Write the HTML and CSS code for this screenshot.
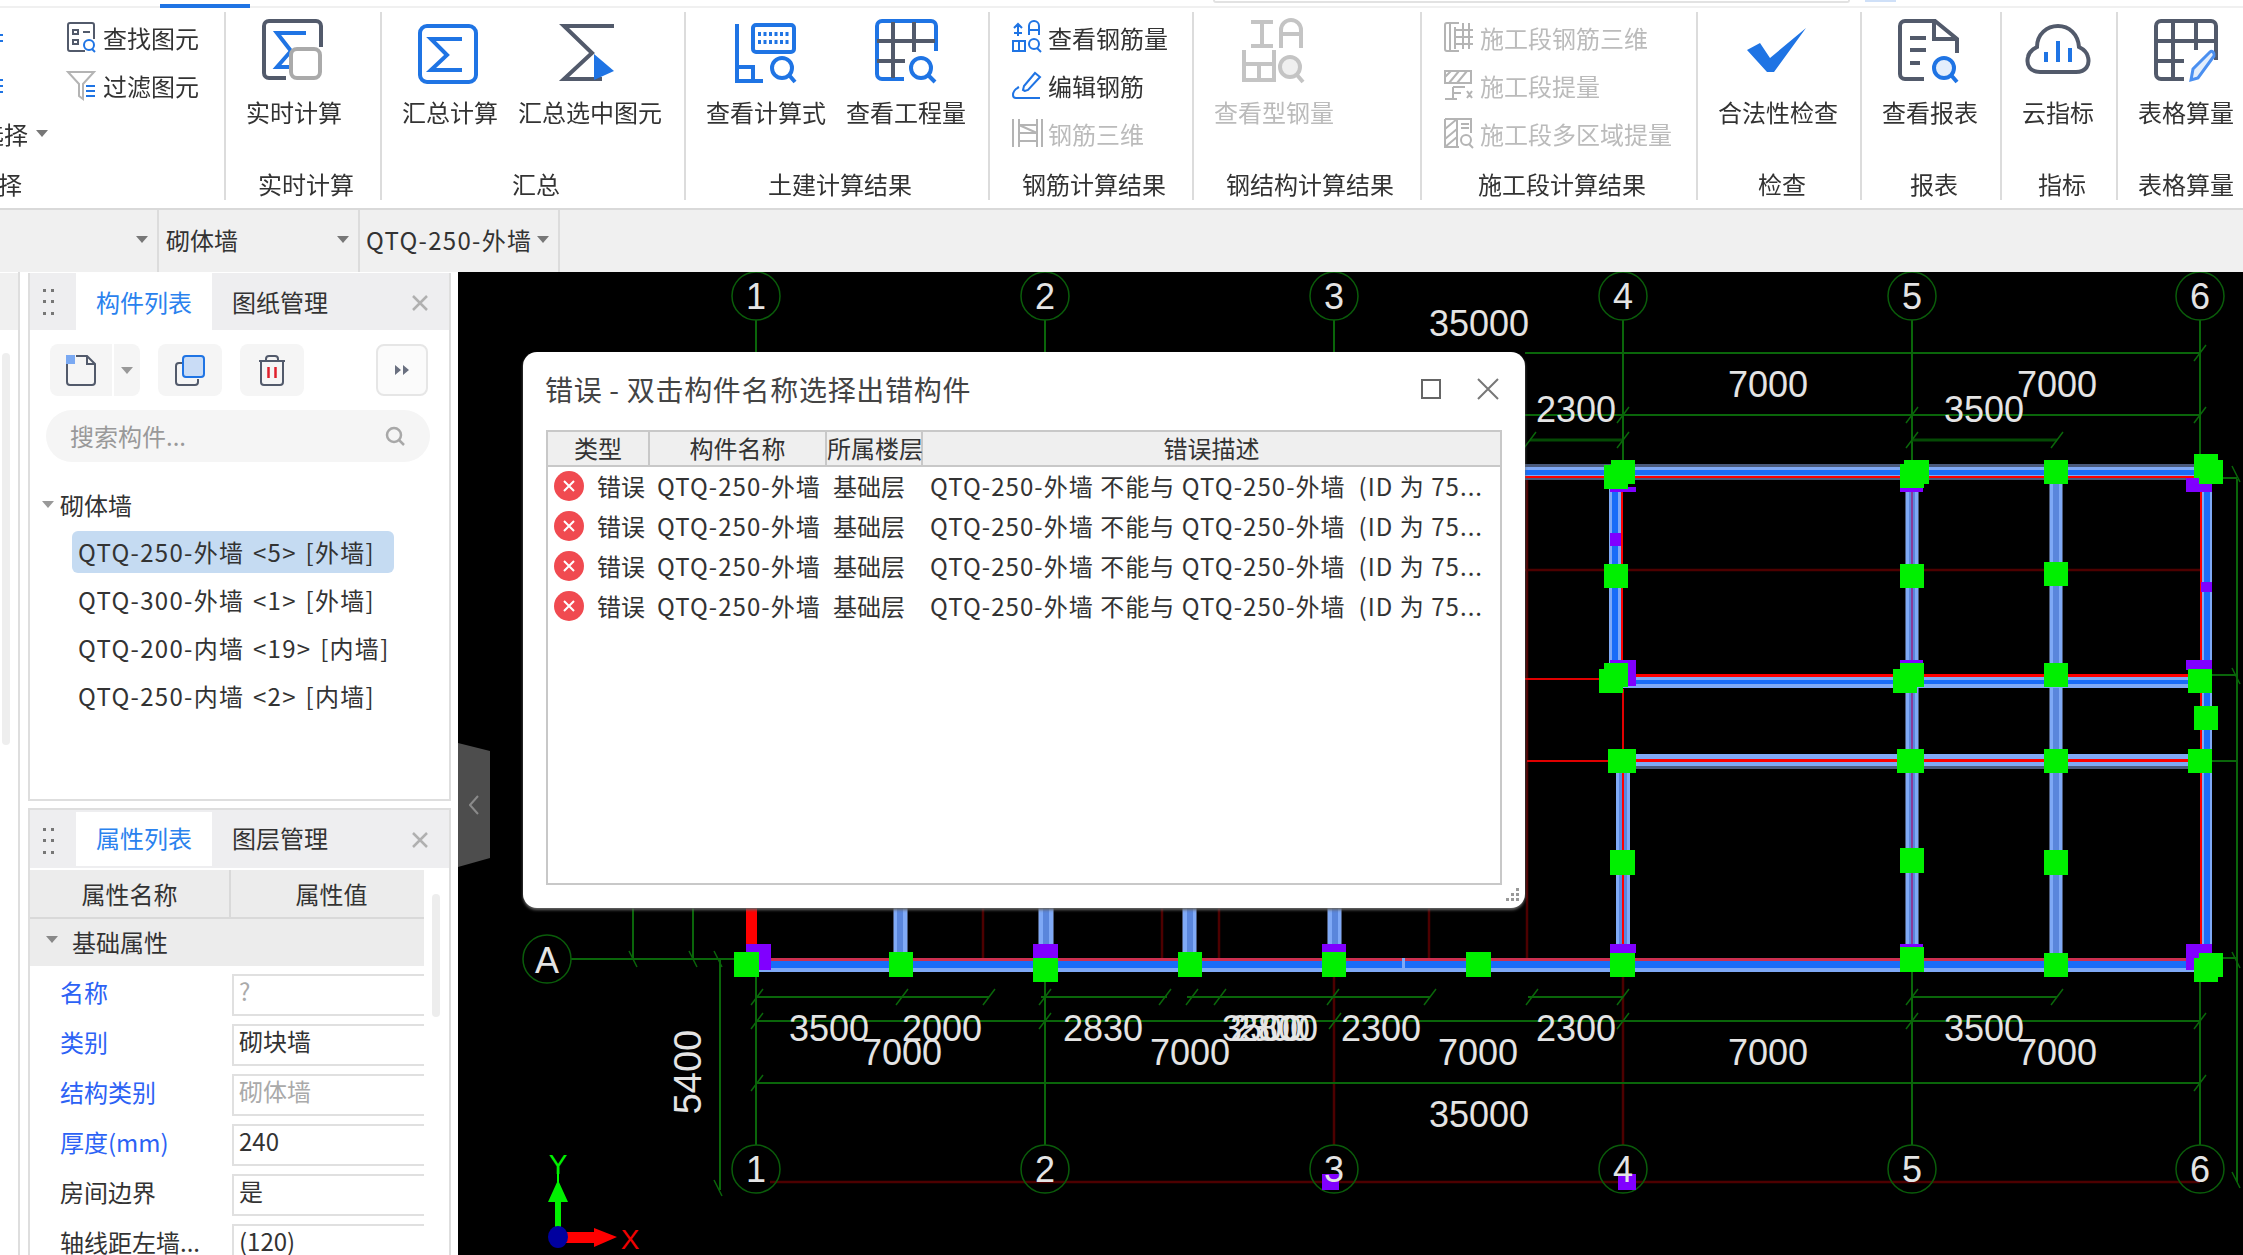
FILE: index.html
```html
<!DOCTYPE html>
<html lang="zh-CN">
<head>
<meta charset="utf-8">
<title>错误 - 双击构件名称选择出错构件</title>
<link rel="stylesheet" href="styles.css">
</head>
<body>
<div class="app">
  <div class="top">
    <div class="top-tab"></div>
    <div class="top-search"></div>
    <div class="top-chip"></div>
  </div>

  <div class="ribbon">
    <section class="group w0">
      <div class="col first">
        <div class="small first-row">
          <svg class="cut" viewBox="0 0 4 30"><path class="b2" d="M0 13h3M0 19h3"/></svg>
          <svg class="ic32" viewBox="0 0 32 32"><path class="d2" d="M19 30H4a2 2 0 0 1-2-2V4a2 2 0 0 1 2-2h22a2 2 0 0 1 2 2v14"/><path class="d2" d="M7 9h5v4H7zM17 11h7M7 19h5v4H7z"/><circle class="b2" cx="23" cy="24" r="5"/><path class="b2" d="M26 28l3 3"/></svg>
          <span>查找图元</span>
        </div>
        <div class="small first-row">
          <svg class="cut" viewBox="0 0 4 30"><path class="b2" d="M0 10h3M0 16h3M0 22h3"/></svg>
          <svg class="ic32" viewBox="0 0 32 32"><path class="g2" d="M2 3h26L17 15v15l-4-3V15z"/><path class="b2" d="M20 17h9M20 22h9M20 27h9"/></svg>
          <span>过滤图元</span>
        </div>
        <div class="small clipped"><span class="neg">选择</span><i class="tri"></i></div>
      </div>
      <div class="label left-cut">选择</div>
    </section>

    <section class="group w1">
      <div class="items">
        <div class="big">
          <svg class="ic64" viewBox="0 0 64 64"><path class="dk" d="M24 58H7a5 5 0 0 1-5-5V6a5 5 0 0 1 5-5h47a5 5 0 0 1 5 5v21"/><path class="bl" d="M44 13H15l14 18-14 16h13"/><rect class="gy" x="29" y="29" width="29" height="29" rx="6"/></svg>
          <span>实时计算</span>
        </div>
      </div>
      <div class="label">实时计算</div>
    </section>

    <section class="group w2">
      <div class="items">
        <div class="big w96">
          <svg class="ic64" viewBox="0 0 64 64"><rect class="bl" x="2" y="6" width="56" height="56" rx="7"/><path class="bl" d="M44 19H13l16 16-16 15h31"/></svg>
          <span>汇总计算</span>
        </div>
        <div class="big">
          <svg class="ic64" viewBox="0 0 64 64"><path class="dk" d="M56 6H6l28 27L6 59h38"/><path class="blf" d="M36 34l20 17-20 9z"/></svg>
          <span>汇总选中图元</span>
        </div>
      </div>
      <div class="label">汇总</div>
    </section>

    <section class="group w3">
      <div class="items">
        <div class="big">
          <svg class="ic64" viewBox="0 0 64 64"><path class="bl" d="M3 4v57h26M3 47h16v14"/><rect class="bl" x="19" y="5" width="41" height="27" rx="3"/><path class="bl3 dots" d="M24 14h32M24 22h32"/><circle class="bl" cx="48" cy="48" r="10"/><path class="bl" d="M55 55l6 7"/></svg>
          <span>查看计算式</span>
        </div>
        <div class="big">
          <svg class="ic64" viewBox="0 0 64 64"><path class="bl" d="M30 59H8a5 5 0 0 1-5-5V6a5 5 0 0 1 5-5h49a5 5 0 0 1 5 5v25"/><path class="dk" d="M19 2v56M40 2v30M3 21h58M3 41h28"/><circle class="bl" cx="47" cy="48" r="10"/><path class="bl" d="M54 55l7 7"/></svg>
          <span>查看工程量</span>
        </div>
      </div>
      <div class="label">土建计算结果</div>
    </section>

    <section class="group w4">
      <div class="col">
        <div class="small">
          <svg class="ic32" viewBox="0 0 32 32"><path class="b2" d="M7 3v12M3 7l4-4 4 4M3 12h8M2 20v10h12V20zM8 20v10M18 14V5a5 5 0 0 1 10 0v9M18 9h10"/><circle class="b2" cx="23" cy="23" r="5"/><path class="b2" d="M26 27l4 4"/></svg>
          <span>查看钢筋量</span>
        </div>
        <div class="small">
          <svg class="ic32" viewBox="0 0 32 32"><path class="b2" d="M14 22l-2-1 1-4L24 4l5 4-12 13zM8 18c-4 2-6 5-6 8 0 2 1 3 3 3h24"/></svg>
          <span>编辑钢筋</span>
        </div>
        <div class="small off">
          <svg class="ic32" viewBox="0 0 32 32"><path class="g2" d="M2 2v28M8 2v28M26 2v28M31 2v28M8 8h18M8 16h18M8 24h18M8 8l18 8"/></svg>
          <span>钢筋三维</span>
        </div>
      </div>
      <div class="label">钢筋计算结果</div>
    </section>

    <section class="group w5">
      <div class="items">
        <div class="big off">
          <svg class="ic64" viewBox="0 0 64 64"><path class="gy" d="M9 2h22M20 2v24M9 26h22M39 28V10a8 8 0 0 1 20 0v18M39 14h20M2 30v30h30V30M2 44h30M17 44v16"/><circle class="gyf" cx="48" cy="47" r="10"/><path class="gy" d="M55 55l6 7"/></svg>
          <span>查看型钢量</span>
        </div>
      </div>
      <div class="label">钢结构计算结果</div>
    </section>

    <section class="group w6">
      <div class="col">
        <div class="small off">
          <svg class="ic32" viewBox="0 0 32 32"><path class="g2" d="M16 2H4a2 2 0 0 0-2 2v24a2 2 0 0 0 2 2h12M7 2v28M12 6v22M20 2v26M26 2v26M12 9h18M12 16h18M12 23h18"/></svg>
          <span>施工段钢筋三维</span>
        </div>
        <div class="small off">
          <svg class="ic32" viewBox="0 0 32 32"><path class="g2" d="M2 2h26v12H2zM8 2l-6 6M16 2L6 14M24 2L14 14M10 18h12M10 18v12M10 24h8M2 30h12M24 22l5 7M29 22l-5 7"/></svg>
          <span>施工段提量</span>
        </div>
        <div class="small off">
          <svg class="ic32" viewBox="0 0 32 32"><path class="g2" d="M2 2h26v14M2 2v28h14M2 12L14 2M2 22L14 12M2 30l12-10M14 2v28M18 7h8M18 11h8"/><circle class="g2" cx="23" cy="23" r="5"/><path class="g2" d="M26 27l4 4"/></svg>
          <span>施工段多区域提量</span>
        </div>
      </div>
      <div class="label">施工段计算结果</div>
    </section>

    <section class="group w7">
      <div class="items">
        <div class="big">
          <svg class="ic64" viewBox="0 0 64 64"><path class="blf" d="M1 30l13-7 10 15L60 8 28 52h-7z"/></svg>
          <span>合法性检查</span>
        </div>
      </div>
      <div class="label">检查</div>
    </section>

    <section class="group w8">
      <div class="items">
        <div class="big">
          <svg class="ic64" viewBox="0 0 64 64"><path class="dk" d="M26 59H7a5 5 0 0 1-5-5V6a5 5 0 0 1 5-5h30l22 18v14M36 2v17h22M12 18h16M12 30h16M12 43h10"/><circle class="blp" cx="46" cy="48" r="10"/><path class="bl" d="M53 55l6 7"/></svg>
          <span>查看报表</span>
        </div>
      </div>
      <div class="label">报表</div>
    </section>

    <section class="group w9">
      <div class="items">
        <div class="big">
          <svg class="ic64" viewBox="0 0 64 64"><path class="dk" d="M14 52C4 52 0 45 2 37c1-5 5-8 9-10C11 14 21 6 32 6s20 8 21 21c4 2 8 5 9 10 2 8-2 15-12 15z"/><path class="bl3w" d="M20 42V32M32 42V21M44 42V28"/></svg>
          <span>云指标</span>
        </div>
      </div>
      <div class="label">指标</div>
    </section>

    <section class="group w10">
      <div class="items">
        <div class="big">
          <svg class="ic64" viewBox="0 0 64 64"><path class="dk" d="M30 59H7a5 5 0 0 1-5-5V6a5 5 0 0 1 5-5h50a5 5 0 0 1 5 5v34M19 2v56M42 2v28M2 21h60M2 41h28"/><path class="b2l" d="M37 60l2-11 17-17c2-2 5 1 4 4L44 58z"/></svg>
          <span>表格算量</span>
        </div>
      </div>
      <div class="label">表格算量</div>
    </section>
  </div>

  <div class="bar">
    <div class="cell c1"><i class="tri"></i></div>
    <div class="cell c2"><span>砌体墙</span><i class="tri"></i></div>
    <div class="cell c3"><span class="lat">QTQ-250-外墙</span><i class="tri"></i></div>
  </div>

  <div class="main">
    <aside class="side">
      <div class="strip">
        <div class="strip-tab"></div>
        <div class="strip-scroll"></div>
      </div>
      <div class="panels">
        <div class="panel p1">
          <div class="phead">
            <svg class="grip" viewBox="0 0 14 28"><path class="gripdots" d="M1 1h3v3H1zM9 1h3v3H9zM1 12h3v3H1zM9 12h3v3H9zM1 24h3v3H1zM9 24h3v3H9z"/></svg>
            <div class="tab active">构件列表</div>
            <div class="tab">图纸管理</div>
            <svg class="pclose" viewBox="0 0 16 16"><path d="M1 1l14 14M15 1L1 15"/></svg>
          </div>
          <div class="tools">
            <div class="tbtn split">
              <span class="split-a"><svg class="ic32t" viewBox="0 0 32 32"><path class="d2" d="M2 8v20a3 3 0 0 0 3 3h22a3 3 0 0 0 3-3V10l-8-8H11M22 2v8h8"/><rect class="hatch" x="1" y="1" width="9" height="9"/></svg></span>
              <span class="split-b"><i class="tri"></i></span>
            </div>
            <div class="tbtn wide">
              <svg class="ic32t" viewBox="0 0 32 32"><path class="d2" d="M8 9H5a3 3 0 0 0-3 3v16a3 3 0 0 0 3 3h16a3 3 0 0 0 3-3v-3"/><rect class="copyf" x="9" y="2" width="21" height="21" rx="3"/></svg>
            </div>
            <div class="tbtn wide">
              <svg class="ic32t" viewBox="0 0 32 32"><path class="d2" d="M3 7h26M10 7V5a3 3 0 0 1 3-3h6a3 3 0 0 1 3 3v2M5 7v21a3 3 0 0 0 3 3h16a3 3 0 0 0 3-3V7"/><path class="redb" d="M12.500 13v11M19.500 13v11"/></svg>
            </div>
            <div class="tbtn more"><svg class="ic16" viewBox="0 0 16 12"><path class="moref" d="M1 1l6 5-6 5zM9 1l6 5-6 5z"/></svg></div>
          </div>
          <div class="search">
            <span class="ph">搜索构件...</span>
            <svg class="ic20" viewBox="0 0 20 20"><circle class="sr" cx="9" cy="9" r="7"/><path class="sr" d="M14 14l5 5"/></svg>
          </div>
          <div class="tree-head"><i class="tri"></i><span>砌体墙</span></div>
          <div class="tree-list">
            <div class="tree-row sel">QTQ-250-外墙 &lt;5&gt; [外墙]</div>
            <div class="tree-row">QTQ-300-外墙 &lt;1&gt; [外墙]</div>
            <div class="tree-row">QTQ-200-内墙 &lt;19&gt; [内墙]</div>
            <div class="tree-row">QTQ-250-内墙 &lt;2&gt; [内墙]</div>
          </div>
        </div>
        <div class="panel p2">
          <div class="phead">
            <svg class="grip" viewBox="0 0 14 28"><path class="gripdots" d="M1 1h3v3H1zM9 1h3v3H9zM1 12h3v3H1zM9 12h3v3H9zM1 24h3v3H1zM9 24h3v3H9z"/></svg>
            <div class="tab active">属性列表</div>
            <div class="tab">图层管理</div>
            <svg class="pclose" viewBox="0 0 16 16"><path d="M1 1l14 14M15 1L1 15"/></svg>
          </div>
          <div class="pbody">
            <div class="ptable">
              <div class="pth"><div>属性名称</div><div class="pth-val">属性值</div></div>
              <div class="pgroup"><i class="tri"></i><span>基础属性</span></div>
              <div class="prow"><span class="key blue">名称</span><div class="val muted">?</div></div>
              <div class="prow"><span class="key blue">类别</span><div class="val">砌块墙</div></div>
              <div class="prow"><span class="key blue">结构类别</span><div class="val muted">砌体墙</div></div>
              <div class="prow"><span class="key blue">厚度(mm)</span><div class="val">240</div></div>
              <div class="prow"><span class="key">房间边界</span><div class="val">是</div></div>
              <div class="prow"><span class="key">轴线距左墙...</span><div class="val">(120)</div></div>
            </div>
            <div class="pscroll"></div>
          </div>
        </div>
      </div>
    </aside>

    <div class="canvas">
      <svg class="cad" viewBox="458 272 1785 983">
        <path class="rd1" d="M1525 570H2200M1527 478V960M1334 977V1145M1623 977V1145M770 1182H2200M983 908V960M1162 908V960M1219 908V960M1429 908V960"/>
        <path class="rd2" d="M1912 690V750M2056 690V750"/>
        <path class="rd3" d="M1525 679H1610M1527 761H1610M1623 689V754"/>
        <path class="dim" d="M756 320V352M1045 320V352M1334 320V352M1623 320V465M1912 320V465M2200 320V460M1525 353H2200M1525 415H2200M757 997H989M1041 997H1167M1187 997H1430M1528 997H1623M1912 997H2057M757 1021H2200M757 1083H2200M756 977V1145M1045 982V1145M1912 972V1145M2200 982V1145M571 959H734M633 908V959M693 908V959M720 959V1190M2237 479V1182M2212 478H2237M2212 675H2237M2212 761H2237M2223 958H2237"/>
        <path class="dimb" d="M1530 440H1622M1912 440H2057"/>
        <path class="tick" d="M2194 361l12-16M2194 423l12-16M1906 423l12-16M1617 423l12-16M1524 448l12-16M1617 448l12-16M1906 448l12-16M2051 448l12-16M751 1005l12-16M896 1005l12-16M983 1005l12-16M1039 1005l12-16M1159 1005l12-16M1186 1005l12-16M1214 1005l12-16M1327 1005l12-16M1424 1005l12-16M1526 1005l12-16M1617 1005l12-16M1906 1005l12-16M2051 1005l12-16M751 1029l12-16M1039 1029l12-16M1329 1029l12-16M1617 1029l12-16M1906 1029l12-16M2194 1029l12-16M751 1091l12-16M2194 1091l12-16M629 951l8 16M689 951l8 16M714 951l8 16M714 1180l8 16M2232 466l8 16M2232 668l8 16M2232 952l8 16M2232 1172l8 16"/>
        <g class="bub">
          <circle cx="756" cy="296" r="24"/><circle cx="1045" cy="296" r="24"/><circle cx="1334" cy="296" r="24"/><circle cx="1623" cy="296" r="24"/><circle cx="1912" cy="296" r="24"/><circle cx="2200" cy="296" r="24"/>
          <circle cx="756" cy="1169" r="24"/><circle cx="1045" cy="1169" r="24"/><circle cx="1334" cy="1169" r="24"/><circle cx="1623" cy="1169" r="24"/><circle cx="1912" cy="1169" r="24"/><circle cx="2200" cy="1169" r="24"/>
          <circle cx="547" cy="959" r="24"/>
        </g>
        <g>
          <rect class="wl" x="1609" y="480" width="12" height="194"/><rect class="wb" x="1612" y="480" width="6" height="194"/><rect class="wr" x="1621" y="480" width="2" height="194"/>
          <rect class="wl" x="1616" y="769" width="14" height="189"/><rect class="wd" x="1619" y="769" width="8" height="189"/><rect class="wr" x="1622" y="769" width="2" height="189"/>
          <rect class="wk" x="1905" y="480" width="14" height="480"/><rect class="wl" x="1906" y="480" width="12" height="480"/><rect class="wd" x="1909" y="480" width="6" height="480"/><rect class="wp" x="1911" y="480" width="2" height="480"/>
          <rect class="wk" x="2049" y="480" width="14" height="480"/><rect class="wl" x="2050" y="480" width="12" height="480"/><rect class="wd" x="2053" y="480" width="6" height="480"/>
          <rect class="wr" x="2200" y="480" width="2" height="478"/><rect class="wl" x="2202" y="480" width="10" height="478"/><rect class="wb" x="2204" y="480" width="6" height="478"/>
          <rect class="wk" x="893" y="908" width="15" height="44"/><rect class="wl" x="894" y="908" width="13" height="44"/><rect class="wd" x="897" y="908" width="6" height="44"/>
          <rect class="wk" x="1038" y="908" width="16" height="44"/><rect class="wl" x="1039" y="908" width="14" height="44"/><rect class="wd" x="1043" y="908" width="6" height="44"/>
          <rect class="wk" x="1182" y="908" width="15" height="44"/><rect class="wl" x="1183" y="908" width="13" height="44"/><rect class="wd" x="1187" y="908" width="6" height="44"/>
          <rect class="wk" x="1327" y="908" width="15" height="44"/><rect class="wl" x="1328" y="908" width="13" height="44"/><rect class="wd" x="1332" y="908" width="6" height="44"/>
          <rect class="wr" x="746" y="908" width="11" height="40"/>
        </g>
        <g>
          <rect class="wk" x="1525" y="464" width="685" height="16"/><rect class="wl" x="1525" y="467" width="685" height="10"/><rect class="wb" x="1525" y="470" width="685" height="5"/><rect class="wr" x="1525" y="476" width="685" height="2"/>
          <rect class="wl" x="1620" y="677" width="580" height="11"/><rect class="wb" x="1620" y="680" width="580" height="4"/><rect class="wr" x="1620" y="674" width="580" height="3"/>
          <rect class="wk" x="1620" y="754" width="580" height="15"/><rect class="wl" x="1620" y="754" width="580" height="12"/><rect class="wr" x="1620" y="759" width="580" height="3"/>
          <rect class="wl" x="750" y="958" width="1460" height="14"/><rect class="wb" x="750" y="961" width="1460" height="7"/><rect class="wm" x="750" y="958" width="1460" height="3"/>
          <rect class="wl" x="1402" y="958" width="3" height="14"/>
        </g>
        <g class="pur">
          <rect x="1610" y="487" width="26" height="5"/><rect x="1610" y="533" width="11" height="13"/><rect x="1900" y="488" width="23" height="4"/><rect x="2186" y="478" width="26" height="14"/><rect x="2201" y="582" width="11" height="10"/>
          <rect x="1610" y="660" width="26" height="26"/><rect x="1900" y="660" width="23" height="4"/><rect x="2186" y="660" width="26" height="10"/>
          <rect x="1610" y="944" width="26" height="9"/><rect x="1900" y="944" width="23" height="3"/><rect x="2186" y="944" width="26" height="26"/>
          <rect x="746" y="944" width="25" height="26"/><rect x="1033" y="944" width="25" height="14"/><rect x="1322" y="944" width="24" height="9"/>
          <rect x="1322" y="1174" width="17" height="16"/><rect x="1618" y="1174" width="18" height="16"/>
        </g>
        <g class="col-g">
          <rect x="1611" y="460" width="24" height="24"/><rect x="1604" y="465" width="24" height="24"/>
          <rect x="1904" y="460" width="25" height="24"/><rect x="1900" y="464" width="24" height="24"/>
          <rect x="2044" y="460" width="24" height="24"/>
          <rect x="2194" y="454" width="24" height="24"/><rect x="2199" y="460" width="24" height="24"/>
          <rect x="1604" y="564" width="24" height="24"/><rect x="1900" y="564" width="24" height="24"/><rect x="2044" y="562" width="24" height="24"/>
          <rect x="1604" y="663" width="24" height="24"/><rect x="1599" y="669" width="24" height="24"/>
          <rect x="1900" y="663" width="24" height="24"/><rect x="1893" y="669" width="24" height="24"/>
          <rect x="2044" y="663" width="24" height="24"/><rect x="2188" y="669" width="24" height="24"/><rect x="2194" y="706" width="24" height="24"/>
          <rect x="1608" y="749" width="28" height="24"/><rect x="1897" y="749" width="27" height="24"/><rect x="2044" y="749" width="24" height="24"/><rect x="2188" y="749" width="24" height="24"/>
          <rect x="1610" y="850" width="25" height="25"/><rect x="1900" y="848" width="24" height="25"/><rect x="2044" y="850" width="24" height="25"/>
          <rect x="1610" y="953" width="25" height="24"/><rect x="1900" y="947" width="24" height="25"/><rect x="2044" y="953" width="24" height="24"/>
          <rect x="2194" y="958" width="24" height="24"/><rect x="2199" y="953" width="24" height="24"/>
          <rect x="734" y="952" width="25" height="25"/><rect x="889" y="952" width="24" height="25"/><rect x="1033" y="958" width="25" height="24"/><rect x="1178" y="952" width="24" height="25"/><rect x="1322" y="952" width="24" height="25"/><rect x="1466" y="952" width="25" height="25"/>
        </g>
        <g class="cadt">
          <text x="756" y="309">1</text><text x="1045" y="309">2</text><text x="1334" y="309">3</text><text x="1623" y="309">4</text><text x="1912" y="309">5</text><text x="2200" y="309">6</text>
          <text x="756" y="1182">1</text><text x="1045" y="1182">2</text><text x="1334" y="1182">3</text><text x="1623" y="1182">4</text><text x="1912" y="1182">5</text><text x="2200" y="1182">6</text>
          <text x="547" y="973">A</text>
          <text x="1479" y="336">35000</text><text x="1768" y="397">7000</text><text x="2057" y="397">7000</text><text x="1576" y="422">2300</text><text x="1984" y="422">3500</text>
          <text x="829" y="1041">3500</text><text x="942" y="1041">2000</text><text x="902" y="1065">7000</text><text x="1103" y="1041">2830</text><text x="1190" y="1065">7000</text>
          <text x="1262" y="1041">3500</text><text x="1270" y="1041">2300</text><text x="1278" y="1041">2800</text>
          <text x="1381" y="1041">2300</text><text x="1478" y="1065">7000</text><text x="1576" y="1041">2300</text><text x="1984" y="1041">3500</text><text x="1768" y="1065">7000</text><text x="2057" y="1065">7000</text><text x="1479" y="1127">35000</text>
          <text class="rot" transform="rotate(-90 701 1072)" x="701" y="1072">5400</text>
        </g>
        <path class="axg" d="M558 1173V1182"/>
        <path class="axgf" d="M558 1180l10 22h-7v27h-6v-27h-7z"/>
        <path class="axrf" d="M566 1232h28v-4l23 9-23 10v-4h-28z"/>
        <ellipse class="axb" cx="558" cy="1237" rx="10" ry="11"/>
        <text class="axt-y" x="558" y="1174">Y</text>
        <text class="axt-x" x="630" y="1249">X</text>
      </svg>

      <div class="handle"><svg class="chev" viewBox="0 0 10 20"><path d="M9 1L1 10l8 9"/></svg></div>

      <div class="dialog">
        <div class="dtitle">
          <span class="dtext">错误 - 双击构件名称选择出错构件</span>
          <svg class="dmax" viewBox="0 0 20 20"><rect x="1" y="1" width="18" height="18"/></svg>
          <svg class="dclose" viewBox="0 0 22 22"><path d="M1 1l20 20M21 1L1 21"/></svg>
        </div>
        <div class="dtable">
          <div class="dhead dgrid">
            <div>类型</div><div>构件名称</div><div>所属楼层</div><div>错误描述</div>
          </div>
          <div class="drow dgrid">
            <div class="dtype"><svg class="err" viewBox="0 0 30 30"><circle cx="15" cy="15" r="15"/><path d="M10 10l10 10M20 10L10 20"/></svg>错误</div>
            <div class="dlat">QTQ-250-外墙</div><div>基础层</div><div class="dlat">QTQ-250-外墙 不能与 QTQ-250-外墙&nbsp; (ID 为 75...</div>
          </div>
          <div class="drow dgrid">
            <div class="dtype"><svg class="err" viewBox="0 0 30 30"><circle cx="15" cy="15" r="15"/><path d="M10 10l10 10M20 10L10 20"/></svg>错误</div>
            <div class="dlat">QTQ-250-外墙</div><div>基础层</div><div class="dlat">QTQ-250-外墙 不能与 QTQ-250-外墙&nbsp; (ID 为 75...</div>
          </div>
          <div class="drow dgrid">
            <div class="dtype"><svg class="err" viewBox="0 0 30 30"><circle cx="15" cy="15" r="15"/><path d="M10 10l10 10M20 10L10 20"/></svg>错误</div>
            <div class="dlat">QTQ-250-外墙</div><div>基础层</div><div class="dlat">QTQ-250-外墙 不能与 QTQ-250-外墙&nbsp; (ID 为 75...</div>
          </div>
          <div class="drow dgrid">
            <div class="dtype"><svg class="err" viewBox="0 0 30 30"><circle cx="15" cy="15" r="15"/><path d="M10 10l10 10M20 10L10 20"/></svg>错误</div>
            <div class="dlat">QTQ-250-外墙</div><div>基础层</div><div class="dlat">QTQ-250-外墙 不能与 QTQ-250-外墙&nbsp; (ID 为 75...</div>
          </div>
        </div>
        <svg class="dgrip" viewBox="0 0 16 16"><path d="M11 1h3v3h-3zM6 6h3v3H6zM11 6h3v3h-3zM1 11h3v3H1zM6 11h3v3H6zM11 11h3v3h-3z"/></svg>
      </div>
    </div>
  </div>
</div>
</body>
</html>
```
FILE: styles.css
```css
* { box-sizing: border-box; }
html, body { margin: 0; padding: 0; width: 2243px; height: 1255px; overflow: hidden; background: #fff; }
body { font-family: "Noto Sans CJK SC", "Noto Sans", sans-serif; font-size: 24px; color: #333; }
.app { width: 2243px; height: 1255px; display: flex; flex-direction: column; overflow: hidden; filter: blur(.4px); }
i.tri { display: inline-block; width: 0; height: 0; border-left: 6px solid transparent; border-right: 6px solid transparent; border-top: 7px solid #777; }

.top { height: 8px; flex: none; display: flex; border-bottom: 2px solid #f0f0f0; }
.top-tab { width: 90px; height: 4px; margin: 4px 0 -2px 160px; background: #1f74e4; }
.top-search { width: 637px; height: 3px; margin-left: 963px; border: 2px solid #e2e2e2; border-top: 0; border-radius: 0 0 4px 4px; }
.top-chip { width: 31px; height: 2px; margin-left: 15px; background: #cfe0f8; }

.ribbon { height: 202px; flex: none; display: flex; padding-top: 4px; border-bottom: 2px solid #d9d9d9; overflow: hidden; }
.group { flex: none; height: 188px; display: flex; flex-direction: column; border-right: 2px solid #dcdcdc; overflow: hidden; }
.w0 { width: 226px; } .w1 { width: 156px; } .w2 { width: 304px; } .w3 { width: 304px; } .w4 { width: 204px; } .w5 { width: 228px; }
.w6 { width: 276px; } .w7 { width: 164px; } .w8 { width: 140px; } .w9 { width: 116px; } .w10 { width: 130px; border-right: 0; overflow: visible; }
.label { margin-top: auto; height: 32px; line-height: 32px; padding-left: 6px; text-align: center; white-space: nowrap; }
.left-cut { text-align: left; padding-left: 0; margin-left: -26px; }
.items { display: flex; gap: 20px; padding: 8px 0 0 20px; }
.big { display: flex; flex-direction: column; align-items: center; flex: none; white-space: nowrap; line-height: 32px; }
.big .ic64 { width: 64px; height: 64px; flex: none; margin-bottom: 12px; overflow: visible; }
.w96 { width: 96px; }
.col { display: flex; flex-direction: column; padding: 1px 0 0 21px; }
.col.first { padding-left: 0; }
.small { height: 48px; display: flex; align-items: center; gap: 5px; white-space: nowrap; }
.ic32 { width: 32px; height: 32px; flex: none; overflow: visible; }
.first-row .ic32 { margin-left: 57px; }
.cut { width: 4px; height: 30px; flex: none; }
.clipped { gap: 8px; }
.neg { margin-left: -20px; }
.off, .off span { color: #bbb; }

.d2, .b2, .g2, .dk, .bl, .bl3, .gy, .b2l, .bl3w { fill: none; }
.d2 { stroke: #525a6b; stroke-width: 2; }
.b2 { stroke: #1f74e4; stroke-width: 2; }
.g2 { stroke: #b4b4b4; stroke-width: 2; }
.dk { stroke: #525a6b; stroke-width: 4; }
.bl { stroke: #1f74e4; stroke-width: 4; }
.bl3 { stroke: #1f74e4; stroke-width: 4; }
.dots { stroke-dasharray: 3 2.500; }
.bl3w { stroke: #1f74e4; stroke-width: 4; }
.gy { stroke: #c4c4c4; stroke-width: 4; }
.gyf { fill: #efefef; stroke: #c4c4c4; stroke-width: 4; }
.blf { fill: #1f74e4; }
.blp { fill: #e3eefc; stroke: #1f74e4; stroke-width: 4; }
.b2l { stroke: #4a8ff0; stroke-width: 3; fill: #e3eefc; }
.w1 .gy { stroke: #aaa; }

.bar { height: 62px; flex: none; display: flex; background: #f0f0f0; }
.cell { height: 62px; display: flex; align-items: center; border-right: 2px solid #dcdcdc; flex: none; padding: 0 0 3px 8px; }
.c1 { width: 159px; justify-content: flex-end; padding-right: 9px; }
.c2 { width: 201px; justify-content: space-between; padding-right: 9px; padding-left: 7px; }
.c3 { width: 200px; justify-content: space-between; padding-right: 9px; padding-left: 6px; }
.lat { letter-spacing: 1.300px; white-space: nowrap; }

.main { flex: 1; display: flex; min-height: 0; }
.side { width: 458px; flex: none; display: flex; overflow: hidden; background: #fff; }
.strip { width: 20px; flex: none; border-right: 2px solid #dedede; }
.strip-tab { height: 57px; margin-top: 1px; background: #f0f0f0; }
.strip-scroll { width: 8px; height: 392px; margin: 23px 0 0 2px; background: #eee; border-radius: 4px; }
.panels { width: 423px; margin-left: 8px; padding-top: 1px; display: flex; flex-direction: column; flex: none; }
.panel { border: 2px solid #dedede; flex: none; }
.p1 { height: 528px; margin-bottom: 7px; border-top: 0; }
.p2 { height: 460px; border-bottom: 0; }
.phead { height: 57px; display: flex; align-items: stretch; background: #eeeef0; }
.p2 .phead { height: 58px; padding: 2px 0; }
.p2 .tab { padding-bottom: 4px; }
.grip { width: 14px; height: 28px; margin: 15px 20px 0 12px; flex: none; }
.gripdots { fill: #777; }
.tab { width: 136px; display: flex; align-items: center; justify-content: center; flex: none; }
.tab.active { background: #fff; color: #2a82ee; }
.pclose { width: 16px; height: 16px; margin: 22px 21px 0 auto; fill: none; stroke: #b0b0b0; stroke-width: 2.500; flex: none; }
.p2 .pclose { margin-top: 20px; }

.tools { display: flex; gap: 18px; padding: 14px 21px 0 20px; }
.tbtn { height: 52px; background: #f5f5f5; border-radius: 8px; display: flex; align-items: center; justify-content: center; flex: none; }
.split { width: 90px; }
.split-a { width: 64px; height: 52px; display: flex; align-items: center; justify-content: center; border-right: 2px solid #fff; }
.split-b { width: 26px; display: flex; justify-content: center; }
.split-b i.tri { border-top-color: #999; }
.wide { width: 64px; }
.more { width: 52px; margin-left: auto; background: #fbfbfb; border: 2px solid #e6e6e6; }
.ic32t { width: 32px; height: 32px; }
.ic16 { width: 16px; height: 12px; }
.moref { fill: #6a7080; }
.hatch { fill: #7aa9f2; }
.copyf { fill: #c9dcf6; stroke: #1f74e4; stroke-width: 2; }
.redb { fill: none; stroke: #e0202c; stroke-width: 2.500; }
.search { height: 52px; margin: 14px 19px 0 16px; background: #f5f5f5; border-radius: 26px; display: flex; align-items: center; justify-content: space-between; padding: 0 25px 0 24px; color: #999; }
.ph { padding-bottom: 2px; }
.ic20 { width: 20px; height: 20px; }
.sr { fill: none; stroke: #a8a8a8; stroke-width: 2.500; }

.tree-head { margin-top: 18px; height: 48px; display: flex; align-items: center; gap: 6px; padding-left: 12px; }
.tree-head i.tri { border-top-color: #999; }
.tree-list { margin: 3px 0 0 42px; width: 322px; display: flex; flex-direction: column; gap: 6px; }
.tree-row { height: 42px; line-height: 42px; padding-left: 6px; border-radius: 6px; white-space: nowrap; letter-spacing: 1.300px; word-spacing: 2px; }
.sel { background: #c5dbf2; }

.pbody { display: flex; }
.ptable { width: 394px; flex: none; overflow: hidden; padding-top: 2px; }
.pscroll { width: 8px; height: 123px; margin: 26px 0 0 8px; background: #ededed; border-radius: 4px; flex: none; }
.pth { height: 49px; display: grid; grid-template-columns: 201px 1fr; background: #ececec; border-bottom: 2px solid #d9d9d9; text-align: center; line-height: 47px; }
.pth div:first-child { border-right: 2px solid #d9d9d9; }
.pth-val { padding-left: 8px; }
.pgroup { height: 47px; background: #ececec; display: flex; align-items: center; gap: 14px; padding: 0 0 2px 16px; }
.pgroup i.tri { border-top-color: #888; margin-bottom: 4px; }
.prow { height: 50px; display: grid; grid-template-columns: 202px 240px; align-items: center; }
.pgroup + .prow { margin-top: 4px; }
.key { padding: 0 0 8px 30px; white-space: nowrap; }
.blue { color: #2c62f5; }
.val { height: 42px; line-height: 30px; border: 2px solid #e0e0e0; padding-left: 5px; }
.muted { color: #aaa; }

.canvas { flex: 1; position: relative; background: #000; overflow: hidden; }
.cad { display: block; width: 1785px; height: 983px; }
.rd1 { fill: none; stroke: #4d0000; stroke-width: 2.500; }
.rd2 { fill: none; stroke: #700000; stroke-width: 2; }
.rd3 { fill: none; stroke: #e00000; stroke-width: 2; }
.dim { fill: none; stroke: #0a660a; stroke-width: 2; }
.dimb { fill: none; stroke: #054a05; stroke-width: 3; }
.tick { fill: none; stroke: #0a660a; stroke-width: 1.500; }
.bub circle { fill: none; stroke: #0a5c0a; stroke-width: 1.500; }
.wk { fill: #4a5a7c; }
.wl { fill: #7fa9f6; }
.wb { fill: #196cf8; }
.wd { fill: #5a86dc; }
.wr { fill: #ff0000; }
.wm { fill: #cc3050; }
.wp { fill: #8a3a9a; }
.pur rect { fill: #8000ff; }
.col-g rect { fill: #00f000; }
.cadt text { font-family: "Liberation Sans", sans-serif; font-size: 36px; fill: #e4e4e4; text-anchor: middle; }
.cadt .rot { font-size: 38px; }
.axg { fill: none; stroke: #00ff00; stroke-width: 2; }
.axgf { fill: #00f000; }
.axrf { fill: #ff0000; }
.axb { fill: #00009f; }
.axt-y, .axt-x { font-family: "Liberation Sans", sans-serif; font-size: 28px; text-anchor: middle; }
.axt-y { fill: #00f000; }
.axt-x { fill: #f00000; }

.handle { position: absolute; left: 0; top: 471px; width: 32px; height: 124px; background: #4d4d4d; clip-path: polygon(0 0, 32px 8px, 32px 115px, 0 124px); display: flex; align-items: center; justify-content: center; }
.chev { width: 10px; height: 20px; fill: none; stroke: #8a8a8a; stroke-width: 2; }

.dialog { position: absolute; left: 65px; top: 80px; width: 1002px; height: 556px; background: #fff; border-radius: 14px; box-shadow: 0 2px 3px #666; display: flex; flex-direction: column; padding: 0 23px; }
.dtitle { height: 78px; flex: none; display: flex; align-items: center; padding-bottom: 4px; }
.dtext { font-size: 28px; letter-spacing: .7px; white-space: nowrap; color: #444; margin-left: -1px; }
.dmax { width: 20px; height: 20px; margin-left: auto; fill: none; stroke: #666; stroke-width: 2; flex: none; }
.dclose { width: 22px; height: 22px; margin: 0 3px 0 36px; fill: none; stroke: #777; stroke-width: 2; flex: none; }
.dtable { width: 956px; height: 455px; flex: none; border: 2px solid #c8c8c8; }
.dgrid { display: grid; grid-template-columns: 102px 177px 96px 1fr; }
.dhead { height: 33px; background: #efefef; border-bottom: 2px solid #c8c8c8; box-sizing: content-box; text-align: center; line-height: 31px; }
.dhead div { border-right: 2px solid #c8c8c8; white-space: nowrap; }
.dhead div:last-child { border-right: 0; }
.drow { height: 40px; line-height: 40px; white-space: nowrap; }
.dhead + .drow { margin-top: -1px; }
.drow > div { padding-left: 6px; overflow: hidden; }
.drow .dlat { padding-left: 7px; }
.dtype { display: flex; align-items: center; gap: 13px; }
.dlat { letter-spacing: 1.050px; }
.err { width: 30px; height: 30px; flex: none; }
.err circle { fill: #f04a50; }
.err path { fill: none; stroke: #fff; stroke-width: 2; }
.dgrip { position: absolute; right: 4px; bottom: 5px; width: 16px; height: 16px; fill: #999; }
```
